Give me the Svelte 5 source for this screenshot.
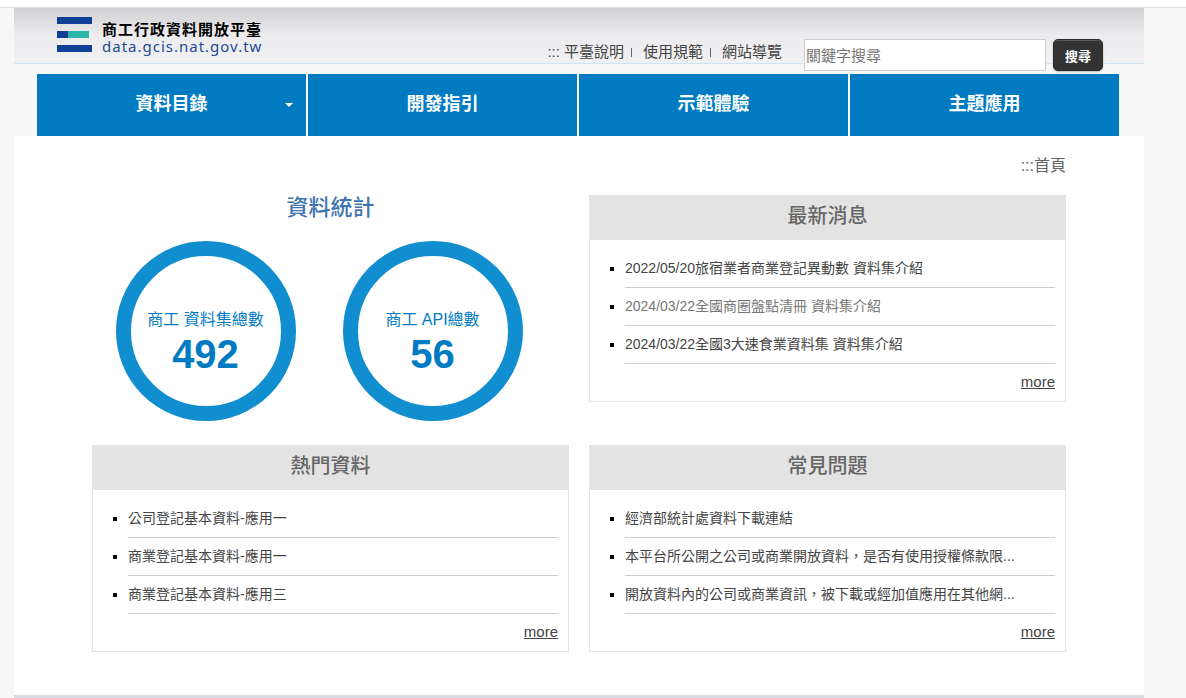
<script>
  let keyword = '';

  const top_links = ['平臺說明', '使用規範', '網站導覽'];

  const menus = [
    {name: '資料目錄', dropdown: true},
    {name: '開發指引', dropdown: false},
    {name: '示範體驗', dropdown: false},
    {name: '主題應用', dropdown: false},
  ];

  const stats = [
    {name: '商工 資料集總數', count: 492},
    {name: '商工 API總數', count: 56},
  ];

  const panels = [
    {
      title: '最新消息',
      items: [
        {text: '2022/05/20旅宿業者商業登記異動數 資料集介紹'},
        {text: '2024/03/22全國商圈盤點清冊 資料集介紹', visited: true},
        {text: '2024/03/22全國3大速食業資料集 資料集介紹'},
      ],
    },
    {
      title: '熱門資料',
      items: [
        {text: '公司登記基本資料-應用一'},
        {text: '商業登記基本資料-應用一'},
        {text: '商業登記基本資料-應用三'},
      ],
    },
    {
      title: '常見問題',
      items: [
        {text: '經濟部統計處資料下載連結'},
        {text: '本平台所公開之公司或商業開放資料，是否有使用授權條款限...'},
        {text: '開放資料內的公司或商業資訊，被下載或經加值應用在其他網...'},
      ],
    },
  ];
</script>

<div class="page">
  <div class="container">
    <header>
      <a class="logo" href="#home">
        <svg width="35" height="35" viewBox="0 0 35 35" aria-hidden="true">
          <rect width="35" height="7" fill="#103f98" />
          <rect y="14" width="11" height="7" fill="#103f98" />
          <rect x="11" y="14" width="21" height="7" fill="#2cb5a9" />
          <rect y="28" width="35" height="7" fill="#103f98" />
        </svg>
        <span class="logo-text">
          <strong>商工行政資料開放平臺</strong>
          <span class="domain">data.gcis.nat.gov.tw</span>
        </span>
      </a>
      <div class="tools">
        <div class="top-links">
          <span class="anchor">:::</span>
          {#each top_links as link, i}
            {#if i > 0}<i class="bar"></i>{/if}
            <a href="#{link}">{link}</a>
          {/each}
        </div>
        <form on:submit|preventDefault>
          <input type="text" aria-label="關鍵字搜尋" placeholder="關鍵字搜尋" bind:value={keyword}>
          <button type="submit">搜尋</button>
        </form>
      </div>
    </header>

    <nav>
      {#each menus as menu}
        <a href="#{menu.name}" class:dropdown={menu.dropdown}>{menu.name}</a>
      {/each}
    </nav>

    <main>
      <div class="breadcrumb">:::<a href="#home">首頁</a></div>
      <div class="panels">
        <section class="stats">
          <h2>資料統計</h2>
          <div class="circles">
            {#each stats as stat}
              <a class="circle" href="#{stat.name}">
                <span>{stat.name}</span>
                <strong>{stat.count}</strong>
              </a>
            {/each}
          </div>
        </section>
        {#each panels as panel}
          <section class="panel">
            <h3>{panel.title}</h3>
            <ul>
              {#each panel.items as item}
                <li><a href="#{panel.title}" class:visited={item.visited}>{item.text}</a></li>
              {/each}
            </ul>
            <a class="more" href="#{panel.title}">more</a>
          </section>
        {/each}
      </div>
    </main>
    <footer></footer>
  </div>
</div>

<style>
  :global(body) {
    background: #f7f7f7;
    font-family: "Liberation Sans", Arial, "Noto Sans CJK TC", sans-serif;
    color: #444;
  }
  a {
    color: inherit;
    text-decoration: none;
  }
  .page {
    border-top: 1px solid #ddd;
    padding: 0 42px 0 14px;
    box-shadow: 0 -7px #fff;
    margin-top: 7px;
  }

  header {
    display: flex;
    justify-content: space-between;
    box-sizing: border-box;
    height: 56px;
    padding: 0 41px 0 43px;
    border-bottom: 1px solid #cfe3f0;
    background: linear-gradient(#d0d0d2, #ececee 50%, #f1f1f4);
  }
  .logo {
    display: flex;
    gap: 10px;
    padding-top: 9px;
  }
  .logo-text {
    display: flex;
    flex-direction: column;
    padding-top: 4px;
  }
  .logo-text strong {
    font-size: 15px;
    line-height: 17px;
    letter-spacing: 1px;
    color: #000;
  }
  .domain {
    font-family: "Noto Sans", "Open Sans", sans-serif;
    font-size: 15px;
    line-height: 16px;
    letter-spacing: 1px;
    color: #1d4a94;
  }
  .tools {
    display: flex;
    align-items: center;
    gap: 22px;
    height: 32px;
    margin-top: 31px;
  }
  .top-links {
    display: flex;
    align-items: center;
    font-size: 15px;
    line-height: 20px;
    margin-bottom: 6px;
  }
  .anchor {
    margin-right: 4px;
  }
  .bar {
    width: 1px;
    height: 9px;
    margin: 0 11px 0 7px;
    background: #666;
  }
  form {
    display: flex;
    gap: 7px;
  }
  input {
    box-sizing: border-box;
    width: 242px;
    height: 32px;
    padding: 1px;
    border: 1px solid #ccc;
    background: #fff;
    font: inherit;
    font-size: 15px;
  }
  input::placeholder {
    color: #757575;
  }
  button {
    width: 50px;
    height: 32px;
    padding: 0;
    border: 1px solid #2b2b2b;
    border-radius: 5px;
    background: #333;
    box-shadow: 0 1px 2px rgba(0, 0, 0, 0.25), inset 0 1px rgba(255, 255, 255, 0.2);
    color: #fff;
    font: inherit;
    font-size: 13px;
    font-weight: bold;
  }

  nav {
    display: grid;
    grid-template-columns: repeat(4, 1fr);
    gap: 2px;
    margin: 10px 25px 0 23px;
    background: #fff;
  }
  nav a {
    position: relative;
    height: 62px;
    background: #007bc2;
    color: #fff;
    font-size: 18px;
    font-weight: bold;
    line-height: 60px;
    text-align: center;
  }
  .dropdown::after {
    content: "";
    position: absolute;
    top: 29px;
    right: 13px;
    border: 4px solid transparent;
    border-top-color: #fff;
    border-bottom: 0;
  }

  main {
    padding: 18px 78px 43px;
    background: #fff;
  }
  .breadcrumb {
    font-size: 16px;
    line-height: 24px;
    margin-bottom: 17px;
    text-align: right;
    color: #666;
  }
  .panels {
    display: grid;
    grid-template-columns: 1fr 1fr;
    column-gap: 20px;
    row-gap: 24px;
    align-items: start;
  }
  .stats {
    text-align: center;
  }
  h2 {
    margin: 0 0 20px;
    color: #3d74b0;
    font-size: 22px;
    font-weight: 500;
    line-height: 26px;
  }
  .circles {
    display: flex;
    justify-content: space-around;
    padding-right: 23px;
  }
  .circle {
    display: flex;
    flex-direction: column;
    align-items: center;
    box-sizing: border-box;
    width: 180px;
    height: 180px;
    padding-top: 54px;
    border: 15px solid #118ecf;
    border-radius: 50%;
    color: #007bc2;
  }
  .circle span {
    font-size: 16px;
    line-height: 20px;
  }
  .circle strong {
    font-size: 40px;
    line-height: 48px;
  }

  .panel {
    display: flex;
    flex-direction: column;
    border: 1px solid #e3e3e3;
  }
  h3 {
    height: 44px;
    margin: 0;
    background: #e3e3e3;
    color: #666;
    font-size: 20px;
    font-weight: 500;
    line-height: 40px;
    text-align: center;
  }
  ul {
    margin: 0;
    padding: 10px 10px 0 35px;
    list-style: square;
  }
  li {
    height: 37px;
    border-bottom: 1px solid #ccc;
    font-size: 14px;
    line-height: 37px;
  }
  li::marker {
    color: #000;
  }
  .visited {
    color: #777;
  }
  .more {
    align-self: flex-end;
    margin: 8px 10px 9px 0;
    font-size: 15px;
    line-height: 20px;
    text-decoration: underline;
  }
  footer {
    height: 3px;
    background: #d5dde0;
  }
</style>
